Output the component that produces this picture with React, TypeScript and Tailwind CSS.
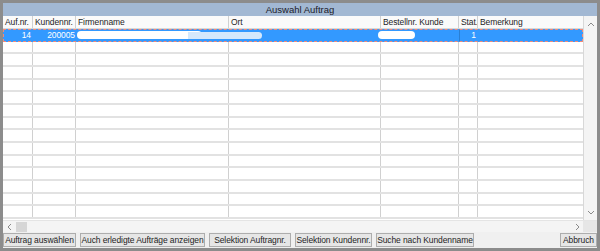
import React from "react";

const COLS = "grid-cols-[30px_43px_153px_152px_78px_19px_105px]";
const HEAD = ["Auf.nr.", "Kundennr.", "Firmenname", "Ort", "Bestellnr. Kunde", "Stat.", "Bemerkung"];

function Chevron({ dir }: { dir: "up" | "down" | "left" | "right" }) {
  const d = {
    up: "M1 5 L4 2 L7 5",
    down: "M1 2 L4 5 L7 2",
    left: "M5 1 L2 4 L5 7",
    right: "M2 1 L5 4 L2 7",
  }[dir];
  const vertical = dir === "up" || dir === "down";
  return (
    <svg width={vertical ? 8 : 7} height={vertical ? 7 : 8} viewBox={vertical ? "0 0 8 7" : "0 0 7 8"}>
      <path d={d} fill="none" stroke="#8a8a8a" strokeWidth="1" />
    </svg>
  );
}

function Row({ selected }: { selected?: boolean }) {
  if (selected) {
    return (
      <div className={`relative grid ${COLS} h-[12.67px] bg-[#3399ff] text-white`}>
        <div className="pr-[2px] text-right leading-[12px]">14</div>
        <div className="overflow-hidden whitespace-nowrap pr-[1px] text-right leading-[12px]">200005</div>
        <div />
        <div />
        <div />
        <div className="border-l border-[#2a7fd4] pr-[2px] text-right leading-[12px]">1</div>
        <div />
        {/* geschwärzte Felder */}
        <div className="absolute left-[74px] top-[2px] h-[8px] w-[125px] rounded-full bg-white" />
        <div className="absolute left-[185px] top-[3px] h-[7px] w-[74px] rounded-r-full bg-[#d4e8fc]" />
        <div className="absolute left-[375px] top-[2px] h-[8px] w-[37px] rounded-full bg-white" />
        <div className="pointer-events-none absolute inset-0 border border-dashed border-[#f08a7a]" />
      </div>
    );
  }
  return (
    <div className={`grid ${COLS} h-[12.67px] border-b-2 border-[#e2e2e2]`}>
      {HEAD.map((h, i) => (
        <div key={h} className={i < 6 ? "border-r border-[#d0d0d0]" : ""} />
      ))}
    </div>
  );
}

export default function App() {
  const buttons = [
    { label: "Auftrag auswählen", w: "w-[73px]" },
    { label: "Auch erledigte Aufträge anzeigen", w: "w-[125px]" },
    { label: "Selektion Auftragnr.", w: "w-[82px]" },
    { label: "Selektion Kundennr.", w: "w-[77px]" },
    { label: "Suche nach Kundenname", w: "w-[98px]" },
  ];

  return (
    <div
      className="h-[251px] w-[600px] border-[3px] border-[#8c8c8c] bg-[#f0f0f0] text-[8.5px] tracking-[-0.1px] text-[#1e1e1e]"
      style={{ fontFamily: '"Liberation Sans", Arial, sans-serif' }}
    >
      <div className="flex h-[13px] items-center justify-center bg-[#a2b8d3] text-[9.5px] leading-none tracking-normal text-[#1b1b2a]">
        Auswahl Auftrag
      </div>

      <div className="flex h-[204px] bg-white">
        <div className="w-[580px]">
          <div className={`grid ${COLS} h-[13px] border-b border-[#d8d8d8] bg-[#fafafa]`}>
            {HEAD.map((h, i) => (
              <div
                key={h}
                className={`overflow-hidden whitespace-nowrap pl-[2px] leading-[12px] ${i < 6 ? "border-r border-[#d0d0d0]" : ""}`}
              >
                {h}
              </div>
            ))}
          </div>
          <Row selected />
          {Array.from({ length: 14 }).map((_, i) => (
            <Row key={i} />
          ))}
        </div>
        <div className="flex w-[14px] flex-col items-center justify-between border-l border-[#d8d8d8] bg-[#f4f4f4] pb-[4px] pt-[5px]">
          <Chevron dir="up" />
          <Chevron dir="down" />
        </div>
      </div>

      <div className="flex h-[12px] border-t border-[#e4e4e4]">
        <div className="flex w-[580px] items-center bg-[#f4f4f4]">
          <div className="flex w-[13px] justify-center">
            <Chevron dir="left" />
          </div>
          <div className="h-[10px] w-[11px] bg-[#d6d6d6]" />
          <div className="flex-1" />
          <div className="flex w-[12px] justify-center">
            <Chevron dir="right" />
          </div>
        </div>
        <div className="w-[14px] bg-[#e6e6e6]" />
      </div>

      <div className="flex h-[16px] items-center gap-[4px]">
        {buttons.map((b) => (
          <div
            key={b.label}
            className={`${b.w} flex h-[14px] items-center justify-center whitespace-nowrap border border-[#adadad] bg-[#e6e6e6] leading-none`}
          >
            {b.label}
          </div>
        ))}
        <div className="ml-auto flex h-[14px] w-[37px] items-center justify-center border border-[#adadad] bg-[#e6e6e6] leading-none">
          Abbruch
        </div>
      </div>
    </div>
  );
}
